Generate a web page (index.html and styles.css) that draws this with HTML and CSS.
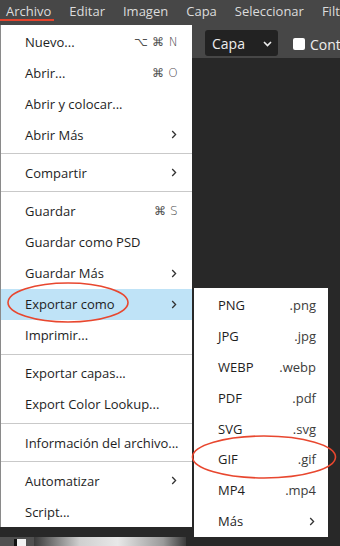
FILE: index.html
```html
<!DOCTYPE html>
<html lang="es">
<head>
<meta charset="utf-8">
<title>Archivo</title>
<link rel="stylesheet" href="styles.css">
</head>
<body>
<div class="app">
  <div class="menubar">
    <span class="mb-item active">Archivo</span>
    <span class="mb-item">Editar</span>
    <span class="mb-item">Imagen</span>
    <span class="mb-item">Capa</span>
    <span class="mb-item">Seleccionar</span>
    <span class="mb-item">Filtro</span>
  </div>
  <div class="toolbar">
    <div class="select">
      <span>Capa</span>
      <svg class="sel-chev" width="9" height="6" viewBox="0 0 9 6"><polyline points="1,1 4.5,4.5 8,1" fill="none" stroke="#eee" stroke-width="1.6"/></svg>
    </div>
    <label class="check"><span class="box"></span><span>Contorno</span></label>
  </div>
  <div class="workspace">
    <div class="bottom-strip">
      <div class="thumb"><span class="thumb-w"></span></div>
      <div class="gradient"></div>
    </div>
  </div>

  <div class="menu">
    <div class="item"><span>Nuevo...</span><span class="sc">⌥ ⌘ N</span></div>
    <div class="item"><span>Abrir...</span><span class="sc">⌘ O</span></div>
    <div class="item"><span>Abrir y colocar...</span></div>
    <div class="item"><span>Abrir Más</span><svg class="chev" width="6" height="9" viewBox="0 0 6 9"><polyline points="1.2,1 4.6,4.5 1.2,8" fill="none" stroke="#333" stroke-width="1.3"/></svg></div>
    <div class="sep"></div>
    <div class="item"><span>Compartir</span><svg class="chev" width="6" height="9" viewBox="0 0 6 9"><polyline points="1.2,1 4.6,4.5 1.2,8" fill="none" stroke="#333" stroke-width="1.3"/></svg></div>
    <div class="sep"></div>
    <div class="item"><span>Guardar</span><span class="sc">⌘ S</span></div>
    <div class="item"><span>Guardar como PSD</span></div>
    <div class="item"><span>Guardar Más</span><svg class="chev" width="6" height="9" viewBox="0 0 6 9"><polyline points="1.2,1 4.6,4.5 1.2,8" fill="none" stroke="#333" stroke-width="1.3"/></svg></div>
    <div class="item hl"><span>Exportar como</span><svg class="chev" width="6" height="9" viewBox="0 0 6 9"><polyline points="1.2,1 4.6,4.5 1.2,8" fill="none" stroke="#333" stroke-width="1.3"/></svg></div>
    <div class="item"><span>Imprimir...</span></div>
    <div class="sep"></div>
    <div class="item"><span>Exportar capas...</span></div>
    <div class="item"><span>Export Color Lookup...</span></div>
    <div class="sep"></div>
    <div class="item"><span>Información del archivo...</span></div>
    <div class="sep"></div>
    <div class="item"><span>Automatizar</span><svg class="chev" width="6" height="9" viewBox="0 0 6 9"><polyline points="1.2,1 4.6,4.5 1.2,8" fill="none" stroke="#333" stroke-width="1.3"/></svg></div>
    <div class="item"><span>Script...</span></div>
  </div>

  <div class="submenu">
    <div class="sitem"><span>PNG</span><span class="ext">.png</span></div>
    <div class="sitem"><span>JPG</span><span class="ext">.jpg</span></div>
    <div class="sitem"><span>WEBP</span><span class="ext">.webp</span></div>
    <div class="sitem"><span>PDF</span><span class="ext">.pdf</span></div>
    <div class="sitem"><span>SVG</span><span class="ext">.svg</span></div>
    <div class="sitem"><span>GIF</span><span class="ext">.gif</span></div>
    <div class="sitem"><span>MP4</span><span class="ext">.mp4</span></div>
    <div class="sitem"><span>Más</span><svg class="chev" width="6" height="9" viewBox="0 0 6 9"><polyline points="1.2,1 4.6,4.5 1.2,8" fill="none" stroke="#333" stroke-width="1.3"/></svg></div>
  </div>

  <svg class="marks" width="340" height="546" viewBox="0 0 340 546">
    <ellipse cx="68" cy="302.5" rx="60" ry="19.5" fill="none" stroke="#e8472f" stroke-width="1.6"/>
    <ellipse cx="264" cy="457" rx="71.5" ry="21" fill="none" stroke="#e8472f" stroke-width="1.6"/>
  </svg>
</div>
</body>
</html>
```

FILE: styles.css
```css
* { box-sizing: border-box; }
html, body {
  margin: 0;
  padding: 0;
  width: 340px;
  height: 546px;
  overflow: hidden;
  background: #282828;
  font-family: "Open Sans", "DejaVu Sans", sans-serif;
  font-size: 13px;
}
.app {
  position: relative;
  width: 340px;
  height: 546px;
  overflow: hidden;
  display: flex;
  flex-direction: column;
}
.menubar {
  height: 24px;
  background: #474747;
  display: flex;
  align-items: center;
  white-space: nowrap;
  color: #dcdcdc;
  flex: none;
}
.mb-item {
  position: relative;
  height: 24px;
  line-height: 23px;
  padding: 0 9px;
  flex: none;
}
.mb-item.active {
  padding: 0 3px 0 6px;
  margin-right: 6px;
}
.mb-item.active::after {
  content: "";
  position: absolute;
  left: 0;
  right: 0;
  top: 19px;
  height: 2px;
  background: #e5432d;
}
.toolbar {
  height: 34px;
  background: #474747;
  display: flex;
  align-items: flex-start;
  padding: 6px 0 0 205px;
  flex: none;
  white-space: nowrap;
}
.select {
  flex: none;
  width: 73px;
  height: 26px;
  background: #222;
  border-radius: 3px;
  display: flex;
  align-items: center;
  justify-content: space-between;
  padding: 0 6px 0 7px;
  color: #eee;
  font-size: 14px;
}
.sel-chev { margin-top: 1px; }
.check {
  flex: none;
  display: flex;
  align-items: center;
  gap: 5px;
  margin-left: 15px;
  height: 26px;
  color: #eee;
  font-size: 14px;
  margin-top: 1px;
}
.box {
  width: 12px;
  height: 12px;
  background: #fff;
  border-radius: 2px;
}
.workspace {
  flex: 1;
  background: #282828;
  display: flex;
  flex-direction: column;
  justify-content: flex-end;
}
.bottom-strip {
  height: 9px;
  display: flex;
}
.thumb {
  width: 34px;
  background: #505050;
  position: relative;
}
.thumb-w {
  position: absolute;
  left: 14px;
  top: 2px;
  width: 12px;
  height: 7px;
  background: #f2f2f2;
  border-left: 3px solid #111;
}
.gradient {
  width: 152px;
  background: linear-gradient(90deg, #3a3a3a 0%, #cfcfcf 30%, #e8e8e8 55%, #9a9a9a 85%, #3a3a3a 100%);
}

.menu {
  position: absolute;
  left: 0;
  top: 25px;
  width: 192px;
  background: #fff;
  border-left: 1px solid #8a8a8a;
  padding-top: 1px;
  color: #1e1e1e;
  white-space: nowrap;
}
.item {
  height: 31px;
  display: flex;
  align-items: center;
  justify-content: space-between;
  padding: 0 14px 0 24px;
}
.item.hl { background: #bfe3f7; }
.sc { color: #505050; font-family: "DejaVu Sans", "Open Sans", sans-serif; font-size: 12px; font-weight: 300; letter-spacing: 0.3px; }
.chev { flex: none; margin-right: 1px; }
.sep {
  height: 1px;
  background: #c9c9c9;
  margin: 3px 0 3.3px;
}
.submenu {
  position: absolute;
  left: 194px;
  top: 288px;
  width: 134px;
  background: #fff;
  padding-top: 1.5px;
  padding-bottom: 0;
  color: #1e1e1e;
  white-space: nowrap;
}
.sitem {
  height: 30.9px;
  display: flex;
  align-items: center;
  justify-content: space-between;
  padding: 0 12px 0 24px;
}
.ext { color: #3c3c3c; }
.marks {
  position: absolute;
  left: 0;
  top: 0;
  pointer-events: none;
}
```
